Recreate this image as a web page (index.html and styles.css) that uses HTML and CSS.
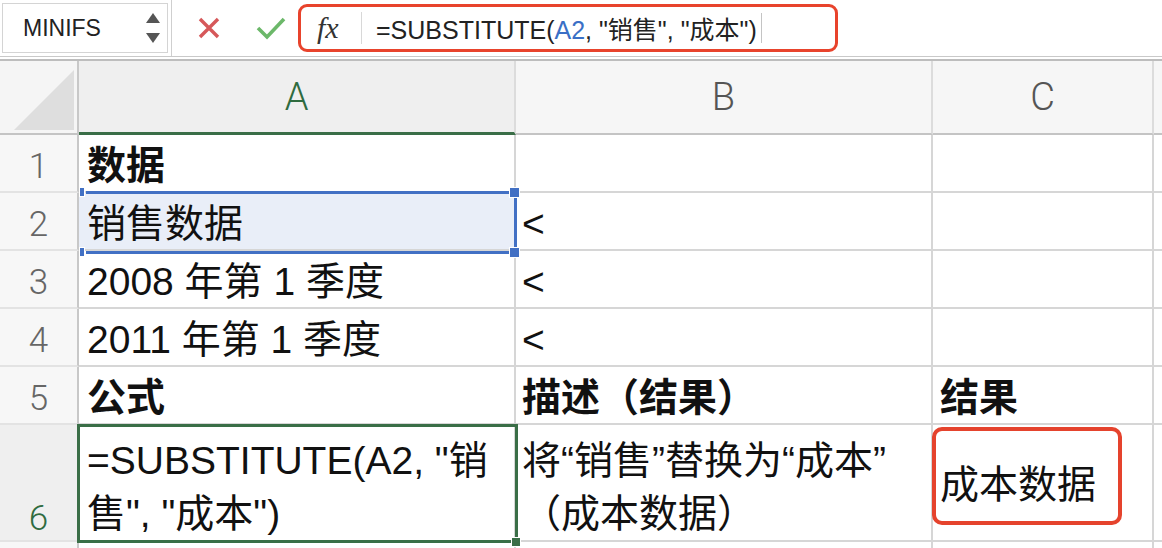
FILE: index.html
```html
<!DOCTYPE html>
<html lang="zh-CN">
<head>
    <meta charset="UTF-8">
    <title>SUBSTITUTE</title>
    <link rel="stylesheet" href="styles.css">
</head>
<body>
<div class="page">
    <div class="toolbar">
        <div class="namebox">
            <span class="name">MINIFS</span>
            <svg class="spin" width="16" height="34" viewBox="0 0 16 34">
                <polygon points="8,2 15,12 1,12" fill="#555"/>
                <polygon points="1,22 15,22 8,32" fill="#555"/>
            </svg>
        </div>
        <div class="divider"></div>
        <div class="actions">
            <svg width="24" height="22" viewBox="0 0 24 22">
                <path d="M3 2 L21 20 M21 2 L3 20" stroke="#d6585a" stroke-width="3.4" fill="none"/>
            </svg>
            <svg width="30" height="24" viewBox="0 0 30 24">
                <path d="M2 12 L11 21 L28 3" stroke="#6cb86a" stroke-width="3.6" fill="none"/>
            </svg>
        </div>
        <div class="formula">
            <span class="fx">fx</span>
            <span class="fx-sep"></span>
            <span class="ftext">=SUBSTITUTE(<span class="ref">A2</span>, "销售", "成本")</span>
            <span class="caret"></span>
        </div>
    </div>

    <div class="sheet">
        <div class="corner">
            <svg width="60" height="60" viewBox="0 0 60 60"><polygon points="60,0 60,60 0,60" fill="#dedede"/></svg>
        </div>
        <div class="colhead active">A</div>
        <div class="colhead">B</div>
        <div class="colhead">C</div>
        <div class="colhead last"></div>

        <div class="rowhead">1</div>
        <div class="cell bold">数据</div>
        <div class="cell colB"></div>
        <div class="cell colC"></div>
        <div class="cell last"></div>

        <div class="rowhead">2</div>
        <div class="cell sel">销售数据</div>
        <div class="cell colB">&lt;</div>
        <div class="cell colC"></div>
        <div class="cell last"></div>

        <div class="rowhead">3</div>
        <div class="cell">2008 年第 1 季度</div>
        <div class="cell colB">&lt;</div>
        <div class="cell colC"></div>
        <div class="cell last"></div>

        <div class="rowhead">4</div>
        <div class="cell">2011 年第 1 季度</div>
        <div class="cell colB">&lt;</div>
        <div class="cell colC"></div>
        <div class="cell last"></div>

        <div class="rowhead">5</div>
        <div class="cell bold">公式</div>
        <div class="cell colB bold">描述（结果）</div>
        <div class="cell colC bold">结果</div>
        <div class="cell last"></div>

        <div class="rowhead tall current">6</div>
        <div class="cell wrap">=SUBSTITUTE(A2, "销<br>售", "成本")</div>
        <div class="cell colB wrap">将“销售”替换为“成本”<br>（成本数据）</div>
        <div class="cell colC">成本数据</div>
        <div class="cell last"></div>

        <div class="rowhead"></div>
        <div class="cell"></div>
        <div class="cell colB"></div>
        <div class="cell colC"></div>
        <div class="cell last"></div>
    </div>

    <!-- selection on A2 -->
    <div class="blue-line" style="left:86px; top:191px; width:424px; height:3px"></div>
    <div class="blue-line" style="left:86px; top:251px; width:424px; height:3px"></div>
    <div class="blue-line" style="left:514px; top:198px; width:3px; height:49px"></div>
    <div class="blue-handle" style="left:510px; top:188px; width:9px; height:9px"></div>
    <div class="blue-handle" style="left:510px; top:248px; width:9px; height:9px"></div>
    <div class="blue-handle" style="left:80px; top:188px; width:4px; height:8px"></div>
    <div class="blue-handle" style="left:80px; top:248px; width:4px; height:8px"></div>

    <!-- active cell A6 -->
    <div class="active-cell"></div>
    <div class="active-handle"></div>

    <!-- annotation -->
    <div class="mark"></div>
</div>
</body>
</html>
```

FILE: styles.css
```css
body {
    margin: 0;
    background: #fff;
    font-family: "Liberation Sans", "Noto Sans CJK SC", sans-serif;
    overflow: hidden;
}
.page {
    position: relative;
    width: 1162px;
    height: 548px;
    overflow: hidden;
}

/* formula bar */
.toolbar {
    display: flex;
    align-items: center;
    height: 56px;
    border-bottom: 1px solid #c9c9c9;
    margin-bottom: 2px;
}
.namebox {
    display: flex;
    align-items: center;
    justify-content: space-between;
    box-sizing: border-box;
    margin-left: 2px;
    width: 166px;
    height: 50px;
    border: 1px solid #d4d4d4;
    padding: 0 6px 0 20px;
}
.name {
    font-size: 23px;
    color: #222;
}
.divider {
    width: 1px;
    height: 56px;
    margin-left: 3px;
    background: #cfcfcf;
}
.actions {
    display: flex;
    align-items: center;
    width: 126px;
    box-sizing: border-box;
    padding-left: 25px;
    gap: 35px;
}
.formula {
    display: flex;
    align-items: center;
    box-sizing: border-box;
    width: 540px;
    height: 48px;
    border: 3px solid #e8432c;
    border-radius: 9px;
}
.fx {
    font-family: "Liberation Serif", "DejaVu Serif", serif;
    font-style: italic;
    font-size: 30px;
    color: #333;
    margin-left: 16px;
    width: 28px;
}
.fx-sep {
    width: 1px;
    height: 32px;
    background: #d8d8d8;
    margin-left: 16px;
}
.ftext {
    margin-left: 14px;
    font-size: 25px;
    color: #222;
    white-space: nowrap;
}
.ref { color: #3a6fc6; }
.caret {
    width: 1px;
    height: 30px;
    background: #c4c4c4;
    margin-left: 4px;
}

/* grid */
.sheet {
    display: grid;
    grid-template-columns: 79px 437px 417px 221px 1fr;
    grid-template-rows: 74px 58px 58px 58px 58px 58px 117px 20px;
    border-top: 2px solid #bdbdbd;
}
.corner, .colhead, .rowhead, .cell {
    box-sizing: border-box;
    border-right: 2px solid #d6d6d6;
    border-bottom: 2px solid #d6d6d6;
}
.corner {
    background: #f5f5f5;
    border-right-color: #c8c8c8;
    border-bottom-color: #c4c4c4;
    padding: 9px 0 0 14px;
}
.corner svg { display: block; }
.colhead {
    display: flex;
    align-items: center;
    justify-content: center;
    background: #f6f6f6;
    border-right-color: #dcdcdc;
    border-bottom-color: #c4c4c4;
    font-family: Roboto, "Liberation Sans", sans-serif;
    font-weight: 300;
    font-size: 38px;
    color: #555;
}
.colhead.active {
    background: #efefef;
    color: #2f6b3f;
    border-bottom: 3px solid #3a6e47;
}
.rowhead {
    display: flex;
    align-items: center;
    justify-content: center;
    padding-top: 6px;
    background: #f7f7f7;
    border-right-color: #c8c8c8;
    border-bottom-color: #e3e3e3;
    font-family: Roboto, "Liberation Sans", sans-serif;
    font-weight: 300;
    font-size: 35px;
    color: #666;
}
.rowhead.tall {
    align-items: flex-end;
    padding-bottom: 1px;
}
.rowhead.current {
    background: #efefef;
    color: #2f6b3f;
}
.cell {
    display: flex;
    align-items: center;
    padding: 5px 0 0 8px;
    font-size: 39px;
    line-height: 44px;
    color: #111;
    white-space: nowrap;
    overflow: hidden;
}
.colB { padding-left: 6px; }
.colC { padding-left: 7px; }
.last { border-right: none; }
.bold { font-weight: bold; }
.sel { background: #e9eef8; }
.cell.wrap {
    align-items: flex-end;
    padding-top: 0;
    line-height: 53px;
}

/* overlays */
.blue-line, .blue-handle {
    position: absolute;
    background: #4270c4;
}
.blue-handle { outline: 1px solid #fff; }
.active-cell {
    position: absolute;
    left: 77px;
    top: 424px;
    width: 441px;
    height: 119px;
    box-sizing: border-box;
    border: 3px solid #3a6e47;
}
.active-handle {
    position: absolute;
    left: 512px;
    top: 538px;
    width: 8px;
    height: 8px;
    background: #3a6e47;
    outline: 1px solid #fff;
}
.mark {
    position: absolute;
    left: 932px;
    top: 427px;
    width: 190px;
    height: 98px;
    box-sizing: border-box;
    border: 4px solid #e5432d;
    border-radius: 10px;
}
```
